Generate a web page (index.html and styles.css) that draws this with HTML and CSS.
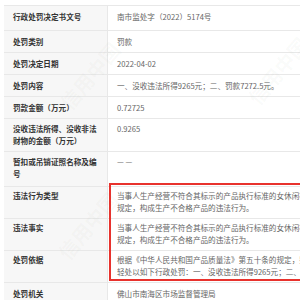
FILE: index.html
```html
<!DOCTYPE html>
<html lang="zh">
<head>
<meta charset="utf-8">
<link rel="stylesheet" href="styles.css">
</head>
<body>
<div class="page">
  <div class="table">
    <div class="row first"><div class="label">行政处罚决定书文号</div><div class="value">南市监处字（2022）5174号</div></div>
    <div class="row"><div class="label">处罚类别</div><div class="value">罚款</div></div>
    <div class="row"><div class="label">处罚决定日期</div><div class="value">2022-04-02</div></div>
    <div class="row"><div class="label">处罚内容</div><div class="value">一、没收违法所得9265元；二、罚款7272.5元。</div></div>
    <div class="row"><div class="label">罚款金额（万元）</div><div class="value">0.72725</div></div>
    <div class="row two"><div class="label">没收违法所得、没收非法财物的金额（万元）</div><div class="value">0.9265</div></div>
    <div class="row two tall"><div class="label">暂扣或吊销证照名称及编号</div><div class="value">— —</div></div>
    <div class="row two tight"><div class="label">违法行为类型</div><div class="value"><span class="line">当事人生产经营不符合其标示的产品执行标准的女休闲裤，违反了《中华人民共和国产品质量法》第二十六条的</span><span class="line">规定，构成生产不合格产品的违法行为。</span></div></div>
    <div class="row two tight"><div class="label">违法事实</div><div class="value"><span class="line">当事人生产经营不符合其标示的产品执行标准的女休闲裤，违反了《中华人民共和国产品质量法》第二十六条的</span><span class="line">规定，构成生产不合格产品的违法行为。</span></div></div>
    <div class="row two tight"><div class="label">处罚依据</div><div class="value"><span class="line">根据《中华人民共和国产品质量法》第五十条的规定，鉴于当事人积极配合调查，决定对其从</span><span class="line">轻处以如下行政处罚：一、没收违法所得9265元；二、罚款7272.5元。</span></div></div>
    <div class="row"><div class="label">处罚机关</div><div class="value">佛山市南海区市场监督管理局</div></div>
    <div class="highlight"></div>
  </div>
  <div class="watermark wm-a">信用中国</div>
  <div class="watermark wm-b">信用中国</div>
  <div class="watermark wm-c">信用中国</div>
</div>
</body>
</html>
```
FILE: styles.css
```css
html, body {
  margin: 0;
  padding: 0;
  background: #ffffff;
  overflow: hidden;
}
.page {
  position: relative;
  width: 300px;
  height: 300px;
  overflow: hidden;
  padding: 5px 0 0 4px;
  box-sizing: border-box;
  font-family: "Noto Sans CJK SC", "Noto Sans", sans-serif;
  font-size: 7.6px;
  line-height: 12px;
}
.table {
  position: relative;
  width: 520px;
  border-top: 1px solid #e8e8e8;
}
.row {
  display: grid;
  grid-template-columns: 104px 1fr;
  border-bottom: 1px solid #e8e8e8;
}
.label {
  background: #f7f7f7;
  color: #333333;
  font-weight: bold;
  padding: 5px 4px 4px 9px;
  border-right: 1px solid #e8e8e8;
}
.value {
  color: #666666;
  padding: 5px 10px 4px 9px;
  white-space: nowrap;
}
.row.first .label, .row.first .value {
  padding-bottom: 7px;
}
.row.two .label, .row.two .value {
  padding-top: 4px;
  padding-bottom: 4px;
}
.row.two.tall .label, .row.two.tall .value {
  padding-bottom: 6px;
}
.row.two.tight .label, .row.two.tight .value {
  padding-top: 3px;
  padding-bottom: 4px;
}
.line {
  display: block;
}
.highlight {
  position: absolute;
  left: 105px;
  top: 177px;
  width: 400px;
  height: 98px;
  border: 2px solid #e8322d;
  box-sizing: border-box;
}
.watermark {
  position: absolute;
  font-size: 20px;
  line-height: 22px;
  font-weight: bold;
  color: rgba(120, 140, 110, 0.045);
  transform: rotate(-50deg);
  pointer-events: none;
  white-space: nowrap;
}
.wm-a {
  left: 48px;
  top: 215px;
}
.wm-b {
  left: 238px;
  top: 60px;
}
.wm-c {
  left: 50px;
  top: 65px;
}
```
